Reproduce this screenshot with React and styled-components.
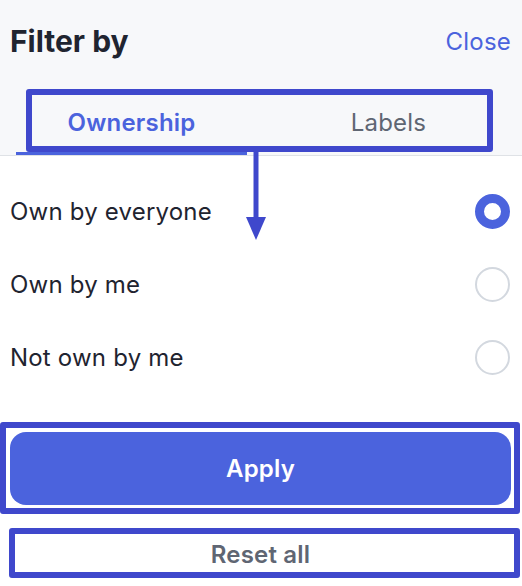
import React from "react";
import styled, { createGlobalStyle } from "styled-components";

const GlobalStyle = createGlobalStyle`
  body {
    margin: 0;
    background: #fff;
    font-family: Inter, "Noto Sans", sans-serif;
  }
`;

const options = ["Own by everyone", "Own by me", "Not own by me"];

const App = () => {
  const selected = 0;

  return (
    <Page>
      <GlobalStyle />
      <Header>
        <TitleRow>
          <h1>Filter by</h1>
          <CloseLink>Close</CloseLink>
        </TitleRow>
        <TabList>
          <Tab $active>Ownership</Tab>
          <Tab>Labels</Tab>
        </TabList>
      </Header>

      <OptionList>
        {options.map((option, optionIndex) => (
          <Option key={optionIndex}>
            <span>{option}</span>
            <Radio $checked={optionIndex === selected} />
          </Option>
        ))}
      </OptionList>

      <Footer>
        <ApplyButton>Apply</ApplyButton>
        <ResetButton>Reset all</ResetButton>
      </Footer>

      {/* annotation marks drawn over the screenshot */}
      <Mark $left={26} $top={89} $width={467} $height={63} />
      <Mark $left={0} $top={422} $width={520} $height={92} />
      <Mark $left={9} $top={528} $width={511} $height={50} />
      <Arrow width="24" height="92" viewBox="0 0 24 92">
        <line x1="12" y1="0" x2="12" y2="70" stroke="#3f48cc" strokeWidth="5" />
        <polygon points="2,67 22,67 12,90" fill="#3f48cc" />
      </Arrow>
    </Page>
  );
};

export default App;

const Page = styled.div`
  position: relative;
  width: 522px;
  height: 586px;
  overflow: hidden;
  background: #fff;
`;

const Header = styled.header`
  background: #f7f8fa;
  border-bottom: 1px solid #dfe2e6;
`;

const TitleRow = styled.div`
  display: flex;
  justify-content: space-between;
  align-items: center;
  padding: 21px 11px 0 10px;
  height: 40px;

  h1 {
    margin: 0;
    font-size: 30px;
    font-weight: 700;
    color: #1f2430;
  }
`;

const CloseLink = styled.a`
  font-size: 24px;
  color: #4b63dd;
  letter-spacing: 0.2px;
  cursor: pointer;
`;

const TabList = styled.div`
  display: flex;
  justify-content: space-between;
  padding: 0 18px 0 16px;
  margin-top: 32px;
`;

const Tab = styled.div`
  width: 231px;
  height: 59px;
  display: flex;
  align-items: center;
  justify-content: center;
  font-size: 24px;
  font-weight: ${(p) => (p.$active ? 600 : 400)};
  letter-spacing: 0.2px;
  color: ${(p) => (p.$active ? "#4b63dd" : "#5f6673")};
  border-bottom: 3px solid ${(p) => (p.$active ? "#4b63dd" : "transparent")};
`;

const OptionList = styled.div`
  padding-top: 19px;
`;

const Option = styled.label`
  display: flex;
  justify-content: space-between;
  align-items: center;
  height: 73px;
  padding: 0 12px 0 10px;
  font-size: 24px;
  letter-spacing: 0.2px;
  color: #1f2430;
`;

const Radio = styled.span`
  box-sizing: border-box;
  width: 35px;
  height: 35px;
  border-radius: 50%;
  background: #fff;
  border: ${(p) => (p.$checked ? "9.5px solid #4b63dd" : "2px solid #d3d8df")};
`;

const Footer = styled.div`
  display: flex;
  flex-direction: column;
  padding: 38px 11px 0 10px;
  gap: 29px;
`;

const ApplyButton = styled.button`
  height: 73px;
  border: none;
  border-radius: 16px;
  background: #4b63dd;
  color: #fff;
  font-family: inherit;
  font-size: 24px;
  font-weight: 600;
  letter-spacing: 0.2px;
  cursor: pointer;
`;

const ResetButton = styled.button`
  height: 40px;
  border: none;
  background: none;
  color: #5f6673;
  font-family: inherit;
  font-size: 24px;
  font-weight: 600;
  letter-spacing: 0.2px;
  cursor: pointer;
`;

const Mark = styled.div`
  position: absolute;
  box-sizing: border-box;
  left: ${(p) => p.$left}px;
  top: ${(p) => p.$top}px;
  width: ${(p) => p.$width}px;
  height: ${(p) => p.$height}px;
  border: 6px solid #3f48cc;
  border-radius: 3px;
  pointer-events: none;
`;

const Arrow = styled.svg`
  position: absolute;
  left: 244px;
  top: 150px;
`;
